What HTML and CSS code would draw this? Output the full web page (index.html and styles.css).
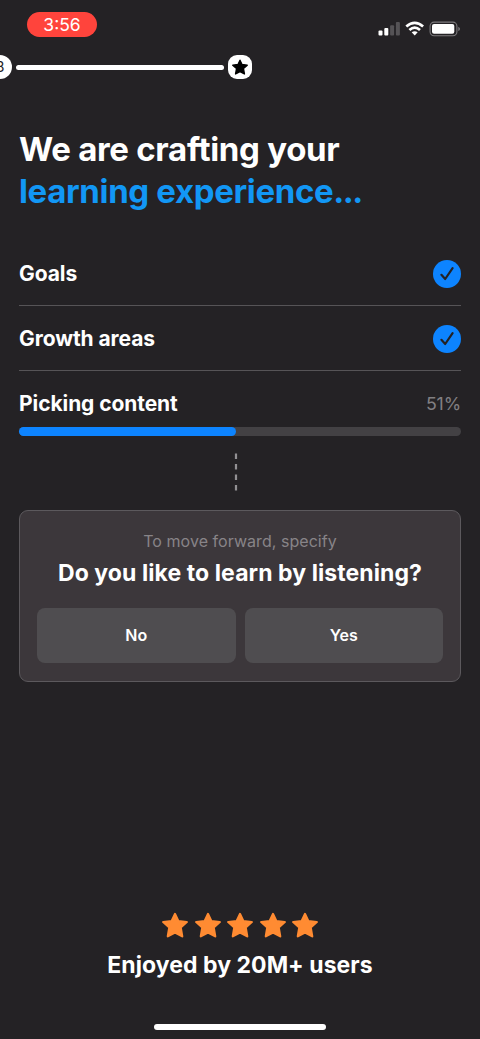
FILE: index.html
```html
<!DOCTYPE html>
<html lang="en">
<head>
<meta charset="utf-8">
<title>Learning experience</title>
<link rel="stylesheet" href="styles.css">
</head>
<body>
<svg class="defs" aria-hidden="true">
  <symbol id="star" viewBox="0 0 26 26"><path d="M13 2 16.300 9 24.800 10 18.700 15.500 20.200 24.300 13 20.600 5.800 24.300 7.300 15.500 1.200 10 9.700 9Z" fill="currentColor" stroke="currentColor" stroke-width="2.200" stroke-linejoin="round"/></symbol>
  <symbol id="check" viewBox="0 0 28 28"><circle cx="14" cy="14" r="14" fill="#0d84ff"/><path d="M8.400 14.800 12.200 19 19.600 8.200" fill="none" stroke="#242225" stroke-width="2.200" stroke-linecap="round" stroke-linejoin="round"/></symbol>
</svg>
<main class="screen">
  <header class="status">
    <span class="clock">3:56</span>
    <svg class="indicators" width="84" height="16" viewBox="0 0 84 16">
      <g fill="#fff"><rect x=".500" y="9.500" width="4" height="5" rx="1"/><rect x="6.300" y="7" width="4" height="7.500" rx="1"/></g>
      <g fill="#555356"><rect x="12.100" y="4.300" width="4" height="10.200" rx="1"/><rect x="17.900" y="1" width="4" height="13.500" rx="1"/></g>
      <g fill="none" stroke="#fff" stroke-width="2.700"><path d="M28.300 5.600Q36.700 -1.800 45.100 5.600"/><path d="M31.400 8.900Q36.700 4.200 42 8.900"/></g>
      <path d="M33.700 11.300Q36.700 9 39.700 11.300L36.700 14.400Z" fill="#fff"/>
      <rect x="52.100" y="1.100" width="26.800" height="13.600" rx="4" fill="none" stroke="#7d7b7e" stroke-width="1.100"/>
      <rect x="54" y="3" width="22.300" height="9.800" rx="2" fill="#fff"/>
      <path d="M80.300 5.700Q82 6.400 82 7.900T80.300 10.100Z" fill="#7d7b7e"/>
    </svg>
  </header>
  <div class="stepper">
    <span class="step">3</span>
    <span class="track"></span>
    <span class="goal"><svg width="16" height="16"><use href="#star"/></svg></span>
  </div>
  <h1 class="title">We are crafting your<br><span class="accent">learning experience<span class="dots">...</span></span></h1>
  <section class="tasks">
    <div class="task"><span>Goals</span><svg width="28" height="28"><use href="#check"/></svg></div>
    <div class="task"><span>Growth areas</span><svg width="28" height="28"><use href="#check"/></svg></div>
    <div class="task current"><span>Picking content</span><span class="percent">51%</span></div>
    <div class="progress"><div class="fill"></div></div>
  </section>
  <svg class="connector" width="4" height="38" viewBox="0 0 4 38"><path d="M2 .5V37.500" stroke="#929093" stroke-width="2.200" stroke-dasharray="5.600 4.900"/></svg>
  <section class="card">
    <p class="hint">To move forward, specify</p>
    <h2 class="question">Do you like to learn by listening?</h2>
    <div class="answers"><button class="answer">No</button><button class="answer">Yes</button></div>
  </section>
  <footer class="footer">
    <div class="stars"><svg><use href="#star"/></svg><svg><use href="#star"/></svg><svg><use href="#star"/></svg><svg><use href="#star"/></svg><svg><use href="#star"/></svg></div>
    <p class="enjoyed">Enjoyed by 20M+ users</p>
    <div class="home"></div>
  </footer>
</main>
</body>
</html>
```
FILE: styles.css
```css
* { box-sizing: border-box; }
body { margin: 0; background: #242225; color: #fff; font-family: Inter, "Liberation Sans", sans-serif; }
svg { display: block; flex: none; }
h1, h2, p { margin: 0; }
.defs { width: 0; height: 0; display: none; }
.screen { width: 480px; height: 1039px; overflow: hidden; display: flex; flex-direction: column; }
.status { height: 55px; flex: none; display: flex; justify-content: space-between; align-items: flex-start; padding: 12px 18px 0 27px; }
.clock { width: 70px; height: 25px; border-radius: 13px; background: #ff443c; font-size: 17.5px; line-height: 25px; text-align: center; }
.indicators { margin-top: 9px; }
.stepper { height: 24px; flex: none; display: flex; align-items: center; margin-left: -12px; }
.step { width: 24px; height: 24px; border-radius: 12px; background: #fff; color: #242225; font-size: 14px; line-height: 24px; text-align: center; }
.track { width: 208px; height: 5px; margin: 0 4px; border-radius: 3px; background: #fff; }
.goal { width: 24px; height: 24px; border-radius: 9px; background: #fff; color: #000; display: grid; place-items: center; }
.title { margin: 49px 0 0 19px; font-size: 33px; line-height: 42px; font-weight: 700; letter-spacing: -.3px; white-space: nowrap; }
.accent { color: #1297f5; letter-spacing: -.35px; }
.dots { letter-spacing: -1.5px; }
.tasks { margin: 29px 19px 0; }
.task { height: 65px; display: flex; align-items: center; justify-content: space-between; border-bottom: 1px solid #565457; padding-top: 1px; font-size: 21px; font-weight: 700; letter-spacing: -.08px; }
.task svg { margin-right: -.4px; }
.current { border: 0; padding: 0; }
.percent { color: #817f82; font-size: 17.8px; font-weight: 400; letter-spacing: -.15px; }
.progress { height: 9px; margin-top: -9px; border-radius: 5px; background: #434144; }
.fill { width: 217px; height: 9px; border-radius: 5px; background: #0d84ff; }
.connector { margin: 17px 0 19px 234px; }
.card { margin: 0 19px; height: 172px; flex: none; border: 1px solid #5c595d; border-radius: 9px; background: #3c373b; padding: 19px 17px 0; text-align: center; }
.hint { color: #888488; font-size: 16px; line-height: 22px; letter-spacing: .05px; }
.question { margin-top: 5px; font-size: 23px; line-height: 32px; font-weight: 700; letter-spacing: .08px; white-space: nowrap; }
.answers { display: grid; grid-template-columns: 1fr 1fr; gap: 9px; margin-top: 19px; }
.answer { height: 55px; padding: 0; border: 0; border-radius: 8px; background: #4f4d50; color: #fff; font: 600 16px/55px Inter, sans-serif; }
.footer { margin-top: auto; display: flex; flex-direction: column; align-items: center; }
.stars { display: flex; gap: 6.5px; color: #ff8b32; }
.stars svg { width: 26px; height: 26px; }
.enjoyed { margin-top: 12px; font-size: 23px; line-height: 30px; font-weight: 700; letter-spacing: .05px; }
.home { width: 172px; height: 6px; margin: 44px 0 9px; border-radius: 3px; background: #fff; }
```
